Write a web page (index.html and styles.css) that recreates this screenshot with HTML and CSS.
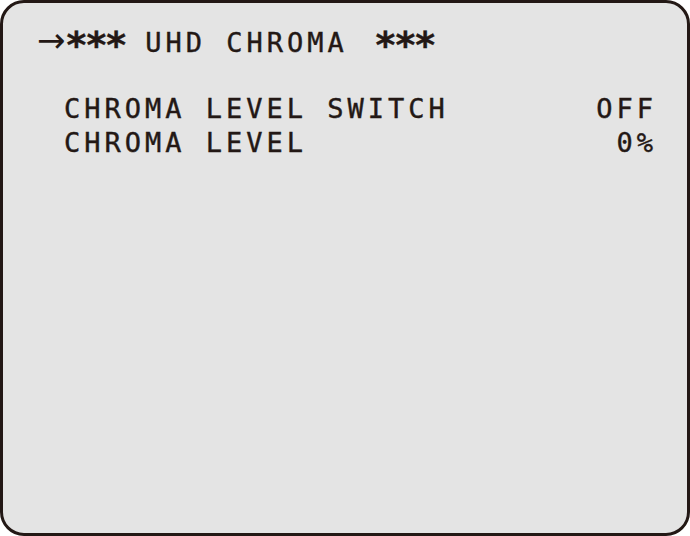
FILE: index.html
```html
<!DOCTYPE html>
<html lang="en">
<head>
    <meta charset="UTF-8">
    <title>UHD CHROMA</title>
    <link rel="stylesheet" href="styles.css">
</head>
<body>

    <div class="screen">
        <!-- Menu title -->
        <div class="title"><span class="cursor">→</span><span class="stars">***</span> UHD CHROMA <span class="stars stars-end">***</span></div>

        <!-- Menu items -->
        <div class="items">
            <div class="item">
                <span class="label">CHROMA LEVEL SWITCH</span>
                <span class="value">OFF</span>
            </div>
            <div class="item">
                <span class="label">CHROMA LEVEL</span>
                <span class="value">0%</span>
            </div>
        </div>
    </div>

</body>
</html>
```

FILE: styles.css
```css
* {
    margin: 0;
    padding: 0;
    box-sizing: border-box;
}

body {
    width: 690px;
    height: 536px;
    background: #ffffff;
}

/* OSD frame */
.screen {
    width: 690px;
    height: 536px;
    background: #e4e4e4;
    border: 3px solid #231815;
    border-radius: 24px;
    padding: 20px 30px 0 34px;
    font-family: "DejaVu Sans Mono", "Liberation Mono", monospace;
    font-size: 27px;
    letter-spacing: 4px;
    color: #231815;
    -webkit-text-stroke: 0.4px #231815;
}

.title {
    line-height: 34px;
    white-space: pre;
}

.cursor {
    display: inline-block;
    width: 28px;
    font-family: "DejaVu Sans", sans-serif;
    font-size: 34px;
    letter-spacing: 0;
    -webkit-text-stroke: 0;
}

.stars {
    display: inline-block;
    width: 60px;
    font-size: 38px;
    font-weight: bold;
    line-height: 34px;
    letter-spacing: -3px;
    vertical-align: top;
    transform: translateY(5px);
}

.stars-end {
    margin-left: 6px;
}

.items {
    margin-top: 32px;
    padding-left: 27px;
}

.item {
    display: flex;
    justify-content: space-between;
    line-height: 34px;
    white-space: pre;
}
```
